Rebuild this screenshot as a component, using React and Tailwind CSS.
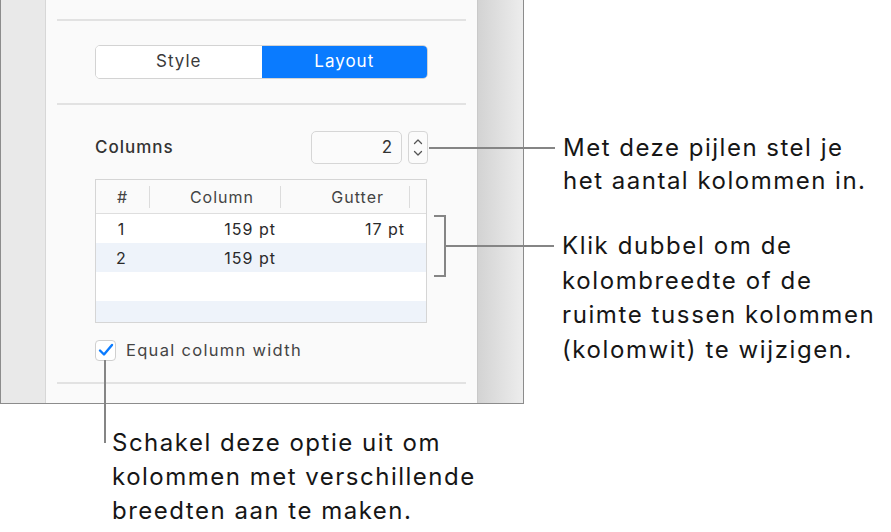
const font = { fontFamily: 'Inter, "Liberation Sans", sans-serif' };

const Sep = () => <div className="mx-[11px] h-[2px] bg-[#e2e2e2]"></div>;

const Chevron = ({ up }) => (
  <svg width="10" height="7" viewBox="0 0 10 7" fill="none">
    <path
      d={up ? 'M1.5 5.5 L5 2 L8.5 5.5' : 'M1.5 1.5 L5 5 L8.5 1.5'}
      stroke="#555"
      strokeWidth="1.3"
      strokeLinecap="round"
      strokeLinejoin="round"
    />
  </svg>
);

const rows = [
  { n: '1', col: '159 pt', gut: '17 pt', bg: 'bg-white' },
  { n: '2', col: '159 pt', gut: '', bg: 'bg-[#eef3fa]' },
  { n: '', col: '', gut: '', bg: 'bg-white' },
  { n: '', col: '', gut: '', bg: 'bg-[#eef3fa]' },
];

const Panel = () => (
  <div className="flex w-[524px] h-[404px] border-x border-b border-[#8c8c8c]">
    <div className="w-[45px] bg-[#e9e9e9] border-r border-[#d7d7d7]"></div>
    <div className="flex-1 flex flex-col bg-[#fafafa] pt-[19px] tracking-[1px]">
      <Sep />
      <div className="mx-[49px] mt-[24px] flex h-[34px] rounded-[5px] overflow-hidden border border-[#d3d3d3] text-[17px]">
        <div className="flex-1 flex items-center justify-center bg-white text-[#3a3a3a]">Style</div>
        <div className="flex-1 flex items-center justify-center bg-[#0a7bff] text-white">Layout</div>
      </div>
      <div className="mt-[24px]">
        <Sep />
      </div>
      <div className="mx-[49px] mt-[26px] flex items-center h-[33px]">
        <div className="flex-1 text-[17px] font-medium text-[#333]">Columns</div>
        <div className="w-[91px] h-[33px] rounded-[5px] border border-[#d6d6d6] bg-[#fbfbfb] flex items-center justify-end pr-[8px] text-[17px] text-[#333]">
          2
        </div>
        <div className="ml-[6px] w-[20px] h-[33px] rounded-[4px] border border-[#d6d6d6] bg-[#fbfbfb] flex flex-col items-center justify-center gap-[5px]">
          <Chevron up />
          <Chevron />
        </div>
      </div>
      <div className="ml-[49px] mr-[50px] mt-[15px] h-[144px] border border-[#d5d5d5] flex flex-col overflow-hidden text-[16px] text-[#2a2a2a]">
        <div className="h-[34px] shrink-0 flex items-center bg-[#fafafa] border-b border-[#dedede] text-[#444]">
          <div className="w-[53px] flex items-center justify-center">#</div>
          <div className="w-px h-[22px] bg-[#dcdcdc]"></div>
          <div className="w-[130px] flex items-center justify-end pr-[26px]">Column</div>
          <div className="w-px h-[22px] bg-[#dcdcdc]"></div>
          <div className="w-[128px] flex items-center justify-end pr-[25px]">Gutter</div>
          <div className="w-px h-[22px] bg-[#dcdcdc]"></div>
        </div>
        {rows.map((r, i) => (
          <div key={i} className={`h-[29px] shrink-0 flex items-center ${r.bg}`}>
            <div className="w-[53px] text-center pr-[2px]">{r.n}</div>
            <div className="w-[131px] text-right pr-[4px]">{r.col}</div>
            <div className="w-[129px] text-right pr-[4px]">{r.gut}</div>
          </div>
        ))}
      </div>
      <div className="ml-[49px] mt-[16px] flex items-center h-[22px]">
        <div className="w-[21px] h-[21px] rounded-[4px] border border-[#cfcfcf] bg-white flex items-center justify-center">
          <svg width="16" height="14" viewBox="0 0 16 14" fill="none">
            <path d="M2 7.5 L6 11.5 L14 2" stroke="#0a7bff" strokeWidth="2.4" strokeLinecap="round" strokeLinejoin="round" />
          </svg>
        </div>
        <div className="ml-[10px] text-[16.5px] tracking-[1.3px] text-[#444]">Equal column width</div>
      </div>
      <div className="mt-[21px]">
        <Sep />
      </div>
    </div>
    <div className="w-[46px] border-l border-[#c9c9c9] bg-gradient-to-r from-[#d3d3d3] to-[#ededed]"></div>
  </div>
);

export default function App() {
  return (
    <div className="relative w-[891px] h-[532px] bg-white overflow-hidden" style={font}>
      <Panel />

      {/* callout: stepper */}
      <div className="absolute left-[429px] top-[147px] w-[126px] h-[2px] bg-[#858585]"></div>
      <div className="absolute left-[563px] top-[131px] text-[24px] leading-[33px] tracking-[1.5px] text-[#161616]">
        Met deze pijlen stel je
        <br />
        het aantal kolommen in.
      </div>

      {/* callout: table bracket */}
      <div className="absolute left-[434px] top-[215px] w-[12px] h-[2px] bg-[#858585]"></div>
      <div className="absolute left-[444px] top-[215px] w-[2px] h-[62px] bg-[#858585]"></div>
      <div className="absolute left-[434px] top-[275px] w-[12px] h-[2px] bg-[#858585]"></div>
      <div className="absolute left-[446px] top-[245px] w-[108px] h-[2px] bg-[#858585]"></div>
      <div className="absolute left-[562px] top-[229px] text-[24px] leading-[34.5px] tracking-[1.6px] text-[#161616]">
        Klik dubbel om de
        <br />
        kolombreedte of de
        <br />
        ruimte tussen kolommen
        <br />
        (kolomwit) te wijzigen.
      </div>

      {/* callout: checkbox */}
      <div className="absolute left-[104px] top-[360px] w-[2px] h-[83px] bg-[#858585]"></div>
      <div className="absolute left-[112px] top-[426px] text-[24px] leading-[34px] tracking-[1.5px] text-[#161616]">
        Schakel deze optie uit om
        <br />
        kolommen met verschillende
        <br />
        breedten aan te maken.
      </div>
    </div>
  );
}
